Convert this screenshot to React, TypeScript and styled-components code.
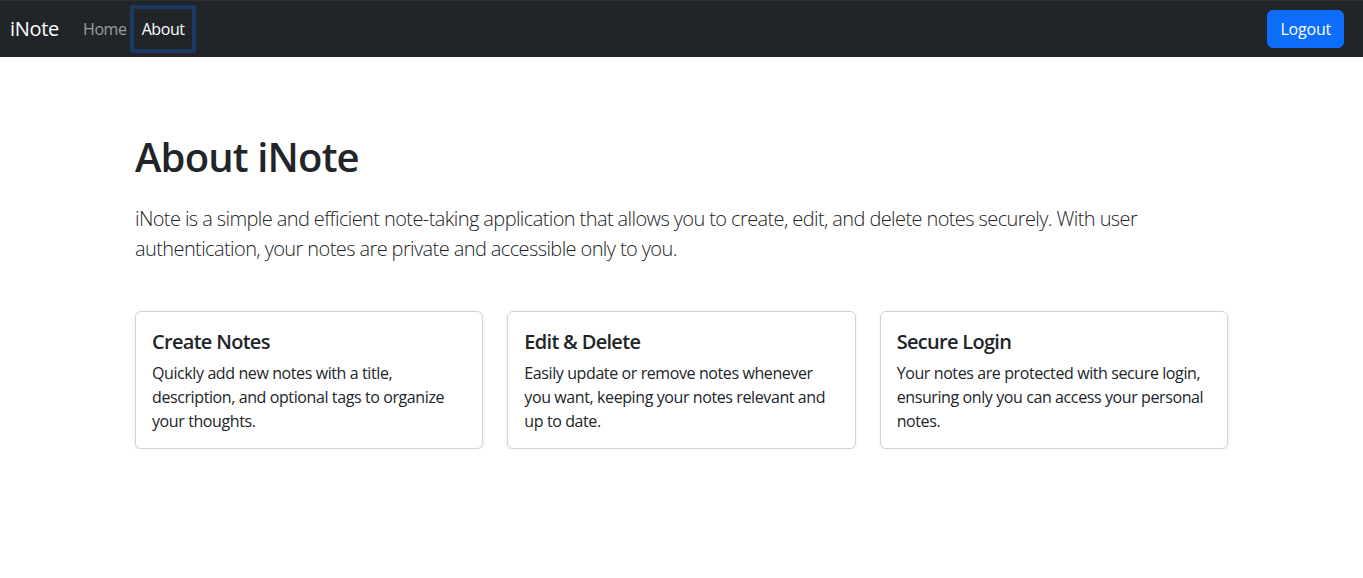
import React from "react";
import styled, { createGlobalStyle } from "styled-components";

const Global = createGlobalStyle`
  * { box-sizing: border-box; }
  body {
    margin: 0;
    font-family: "Open Sans", "Noto Sans", "Liberation Sans", sans-serif;
    color: #212529;
    background: #fff;
    font-size: 16px;
    line-height: 1.5;
  }
`;

const Navbar = styled.nav`
  height: 57px;
  background: #212529;
  border-top: 1px solid #2b3035;
  display: flex;
  align-items: center;
  padding: 0 19px 0 10px;
`;

const Brand = styled.a`
  color: #fff;
  font-size: 20px;
  line-height: 30px;
  margin-right: 16px;
  text-decoration: none;
  letter-spacing: -0.3px;
`;

const NavList = styled.div`
  display: flex;
  align-items: center;
`;

const NavLink = styled.a<{ $active?: boolean; $focused?: boolean }>`
  color: ${(p) => (p.$active ? "#fff" : "rgba(255,255,255,0.55)")};
  font-size: 16px;
  line-height: 24px;
  padding: 8px 7px 8px 8px;
  text-decoration: none;
  letter-spacing: -0.4px;
  border-radius: 1px;
  box-shadow: ${(p) => (p.$focused ? "0 0 0 4px #1b3a63" : "none")};
`;

const Spacer = styled.div`
  flex: 1;
`;

const Button = styled.button`
  background: #0d6efd;
  color: #fff;
  border: 1px solid #0d6efd;
  border-radius: 6px;
  font-family: inherit;
  font-size: 16px;
  line-height: 24px;
  padding: 6px 12px;
  letter-spacing: -0.2px;
`;

const Container = styled.main`
  max-width: 1141px;
  margin: 0 auto;
  padding: 76px 24px 0;
`;

const Title = styled.h1`
  font-size: 40px;
  line-height: 48px;
  font-weight: 600;
  margin: 0 0 23px;
  letter-spacing: -0.85px;
`;

const Lead = styled.p`
  font-size: 20px;
  line-height: 30px;
  font-weight: 300;
  margin: 0 0 47px;
  letter-spacing: -0.6px;
`;

const Cards = styled.div`
  display: grid;
  grid-template-columns: repeat(3, 1fr);
  gap: 24px;
`;

const Card = styled.div`
  border: 1px solid rgba(0, 0, 0, 0.175);
  border-radius: 6px;
  box-shadow: 0 2px 4px rgba(0, 0, 0, 0.075);
  padding: 16px 16px 15px;
`;

const CardTitle = styled.h5`
  font-size: 20px;
  line-height: 24px;
  font-weight: 600;
  margin: 2px 0 7px;
  letter-spacing: -0.7px;
`;

const CardText = styled.p`
  font-size: 16px;
  line-height: 24px;
  margin: 0;
  letter-spacing: -0.4px;
`;

const features = [
  {
    title: "Create Notes",
    text: "Quickly add new notes with a title, description, and optional tags to organize your thoughts.",
  },
  {
    title: "Edit & Delete",
    text: "Easily update or remove notes whenever you want, keeping your notes relevant and up to date.",
  },
  {
    title: "Secure Login",
    text: "Your notes are protected with secure login, ensuring only you can access your personal notes.",
  },
];

export default function App() {
  return (
    <>
      <Global />
      <Navbar>
        <Brand href="#">iNote</Brand>
        <NavList>
          <NavLink href="#">Home</NavLink>
          <NavLink href="#" $active $focused>
            About
          </NavLink>
        </NavList>
        <Spacer />
        <Button>Logout</Button>
      </Navbar>
      <Container>
        <Title>About iNote</Title>
        <Lead>
          iNote is a simple and efficient note-taking application that allows you to create, edit, and
          delete notes securely. With user authentication, your notes are private and accessible only to
          you.
        </Lead>
        <Cards>
          {features.map((f) => (
            <Card key={f.title}>
              <CardTitle>{f.title}</CardTitle>
              <CardText>{f.text}</CardText>
            </Card>
          ))}
        </Cards>
      </Container>
    </>
  );
}
